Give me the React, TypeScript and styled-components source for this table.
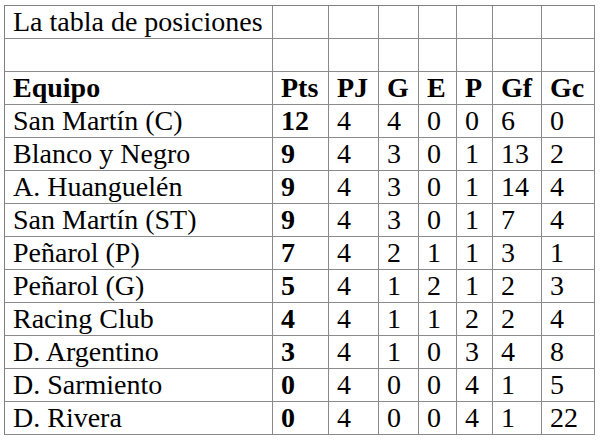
import React from "react";
import styled, { createGlobalStyle } from "styled-components";

const GlobalStyle = createGlobalStyle`
  body {
    margin: 0;
    background: #ffffff;
    font-family: "Liberation Serif", serif;
  }
`;

const Page = styled.div`
  padding: 5px 0 0 4px;
`;

const Grid = styled.div`
  display: inline-block;
  border-top: 1px solid #7f7f7f;
  border-left: 1px solid #7f7f7f;
  font-family: "Liberation Serif", serif;
  font-size: 28px;
  color: #000000;
`;

const Row = styled.div`
  display: grid;
  grid-template-columns: 268px 56px 50px 40px 38px 36px 49px 53px;
`;

const Cell = styled.div<{ $bold?: boolean }>`
  box-sizing: border-box;
  height: 33px;
  padding-left: 8px;
  border-right: 1px solid #8a8a8a;
  border-bottom: 1px solid #8a8a8a;
  font-family: "Liberation Serif", serif;
  font-size: 28px;
  line-height: 32px;
  font-weight: ${(p) => (p.$bold ? "bold" : "normal")};
  white-space: nowrap;
`;

const headers = ["Pts", "PJ", "G", "E", "P", "Gf", "Gc"];

type Team = [string, number, number, number, number, number, number, number];

const teams: Team[] = [
  ["San Martín (C)", 12, 4, 4, 0, 0, 6, 0],
  ["Blanco y Negro", 9, 4, 3, 0, 1, 13, 2],
  ["A. Huanguelén", 9, 4, 3, 0, 1, 14, 4],
  ["San Martín (ST)", 9, 4, 3, 0, 1, 7, 4],
  ["Peñarol (P)", 7, 4, 2, 1, 1, 3, 1],
  ["Peñarol (G)", 5, 4, 1, 2, 1, 2, 3],
  ["Racing Club", 4, 4, 1, 1, 2, 2, 4],
  ["D. Argentino", 3, 4, 1, 0, 3, 4, 8],
  ["D. Sarmiento", 0, 4, 0, 0, 4, 1, 5],
  ["D. Rivera", 0, 4, 0, 0, 4, 1, 22],
];

export default function App() {
  return (
    <>
      <GlobalStyle />
      <Page>
        <Grid>
          <Row>
            <Cell>La tabla de posiciones</Cell>
            {headers.map((h) => (
              <Cell key={h} />
            ))}
          </Row>
          <Row>
            <Cell />
            {headers.map((h) => (
              <Cell key={h} />
            ))}
          </Row>
          <Row>
            <Cell $bold>Equipo</Cell>
            {headers.map((h) => (
              <Cell key={h} $bold>
                {h}
              </Cell>
            ))}
          </Row>
          {teams.map((t) => (
            <Row key={t[0]}>
              {t.map((v, i) => (
                <Cell key={i} $bold={i === 1}>
                  {v}
                </Cell>
              ))}
            </Row>
          ))}
        </Grid>
      </Page>
    </>
  );
}
